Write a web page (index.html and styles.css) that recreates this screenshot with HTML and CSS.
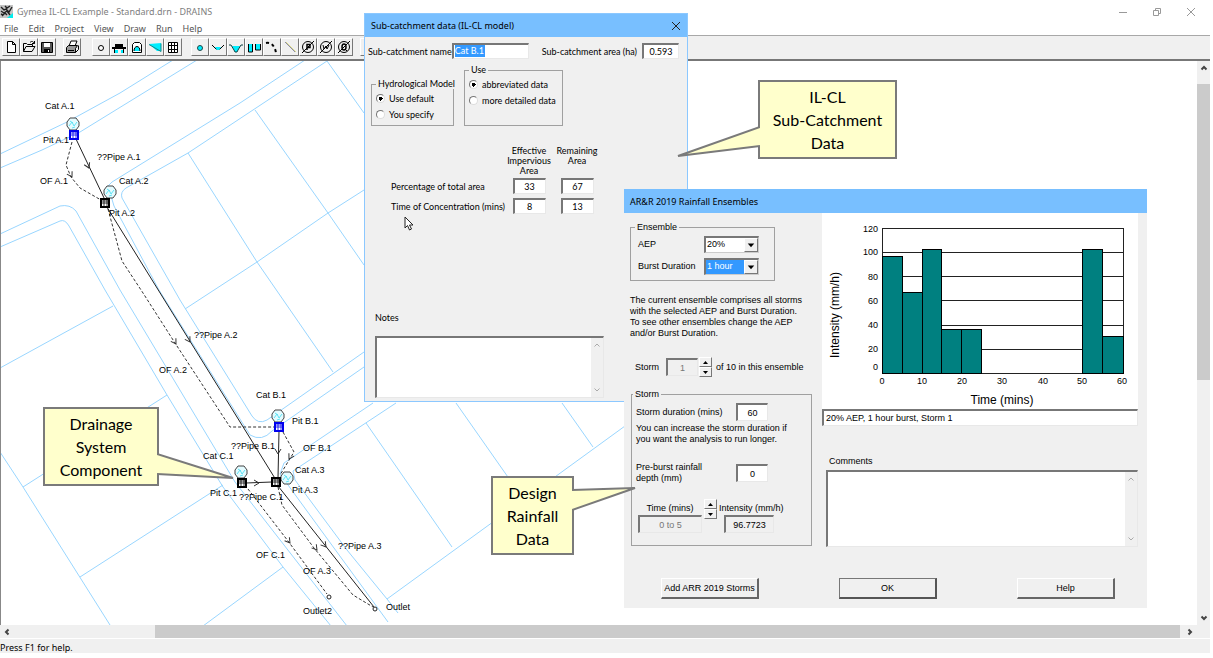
FILE: index.html
```html
<!DOCTYPE html>
<html lang="en">
<head>
    <meta charset="UTF-8">
    <meta name="viewport" content="width=device-width, initial-scale=1.0">
    <title>Gymea IL-CL Example - Standard.drn - DRAINS</title>
    <link rel="stylesheet" href="styles.css">
</head>
<body>

<div class="app">
    <header class="titlebar">
        <svg class="app-icon" width="13" height="13" viewBox="0 0 13 13">
            <rect width="13" height="13" fill="#c4c4c4"/>
            <path d="M1 2l3 3 2-1 3 3 3-5M1 6l3 2 3-2 3 4M2 11l3-3 2 2M5 1l2 2 3-2M1 9l2 1" stroke="#222" stroke-width="1.4" fill="none"/>
            <path d="M7 13l6-5v5z" fill="#0ee"/>
        </svg>
        <span class="app-title">Gymea IL-CL Example - Standard.drn - DRAINS</span>
        <div class="window-buttons">
            <button type="button" aria-label="Minimize"><svg width="10" height="10"><path d="M1 5.500h8"/></svg></button>
            <button type="button" aria-label="Restore"><svg width="10" height="10"><path d="M1.500 3.500h5v5h-5zM3.500 3.500v-2h5v5h-2"/></svg></button>
            <button type="button" aria-label="Close"><svg width="10" height="10"><path d="M1 1l8 8M9 1l-8 8"/></svg></button>
        </div>
    </header>

    <nav class="menubar">
        <button type="button">File</button>
        <button type="button">Edit</button>
        <button type="button">Project</button>
        <button type="button">View</button>
        <button type="button">Draw</button>
        <button type="button">Run</button>
        <button type="button">Help</button>
    </nav>

    <div class="toolbar">
        <div class="tool-group">
            <button type="button" aria-label="New"><svg viewBox="0 0 16 16"><path d="M4.500 2.500h5l3 3v8h-8zM9.500 2.500v3h3" fill="#fff" stroke="#000"/></svg></button>
            <button type="button" aria-label="Open"><svg viewBox="0 0 16 16"><path d="M2.500 12.500v-8h3l1 1h5v2M2.500 12.500l2.500-5h9l-3 5zM9 3.500c2-2 3-1 4.500 1M13.500 2v2.500h-2.500" fill="none" stroke="#000"/></svg></button>
            <button type="button" aria-label="Save"><svg viewBox="0 0 16 16"><path d="M2.500 3.500h11v10h-11z" fill="#555" stroke="#000"/><path d="M5 4h6v4H5z" fill="#fff"/><path d="M5 10h6v4H5z"/><path d="M9 11h1v2H9z" fill="#fff"/></svg></button>
        </div>
        <div class="tool-group">
            <button type="button" aria-label="Print"><svg viewBox="0 0 16 16"><path d="M5 7l2-5h6l-2 5" fill="#fff" stroke="#000"/><path d="M2.500 8.500l2-2h9l-2 3v4h-9z" fill="#999" stroke="#000"/><path d="M11.500 13.500l3-3v-4M4 11.500h6" fill="none" stroke="#000"/></svg></button>
        </div>
        <div class="tool-group wide-gap">
            <button type="button" aria-label="Node"><svg viewBox="0 0 16 16"><circle cx="8" cy="9" r="2.500" fill="#fff" stroke="#000"/></svg></button>
            <button type="button" aria-label="Pit"><svg viewBox="0 0 16 16"><path d="M4 5h8v3h3v2H1V8h3z"/><path d="M4 11h3v3H4zM10 11h3v3h-3z" fill="#0ef"/><path d="M3.500 10v4M12.500 10v4" stroke="#000"/></svg></button>
            <button type="button" aria-label="Sub-catchment"><svg viewBox="0 0 16 16"><path d="M3.500 13.500v-8l2-2h5l2 2v8z" fill="#fff" stroke="#000"/><path d="M5 12c0-6 6-6 6 0" fill="#0ef" stroke="#000"/></svg></button>
            <button type="button" aria-label="Detention basin"><svg viewBox="0 0 16 16"><path d="M2 5l12-1v8h-4z" fill="#0ef"/><path d="M2 5.500l12 7v-8" fill="none" stroke="#188"/></svg></button>
            <button type="button" aria-label="Grid"><svg viewBox="0 0 16 16"><path d="M3.500 3.500h9v10h-9zM6.500 3v11M9.500 3v11M3 6.500h10M3 10.500h10" fill="#fff" stroke="#000"/></svg></button>
        </div>
        <div class="tool-group">
            <button type="button" aria-label="Pipe"><svg viewBox="0 0 16 16"><circle cx="8" cy="9" r="2.500" fill="#0ef" stroke="#244"/></svg></button>
            <button type="button" aria-label="Channel"><svg viewBox="0 0 16 16"><path d="M2 6l4 4h4l4-4" fill="none" stroke="#000"/><path d="M5 8h6l-2 3H7z" fill="#0ef"/></svg></button>
            <button type="button" aria-label="Irregular channel"><svg viewBox="0 0 16 16"><path d="M4 7h8l-2 4-1 2H7l-1-2z" fill="#0ef"/><path d="M1 6h2l3 5 1 2h2l1-2 3-5h2" fill="none" stroke="#144"/></svg></button>
            <button type="button" aria-label="Multi-channel"><svg viewBox="0 0 16 16"><path d="M2.500 5v8h4V5M9.500 5v6h5V5" fill="#0ef" stroke="#000"/></svg></button>
            <button type="button" aria-label="Overflow route"><svg viewBox="0 0 16 16"><path d="M2 4c5-1 9 3 10 10" fill="none" stroke="#000" stroke-width="2" stroke-dasharray="3 3"/></svg></button>
            <button type="button" aria-label="Line"><svg viewBox="0 0 16 16"><path d="M3 3l10 10" stroke="#88a"/><path d="M4 3l10 10" stroke="#dd8"/></svg></button>
            <button type="button" aria-label="Pipe search"><svg viewBox="0 0 16 16"><circle cx="8" cy="8" r="5.500" fill="none" stroke="#000"/><path d="M2 14L14 2" stroke="#000"/><path d="M7 11V5.500h3v3H7" fill="none" stroke="#000" stroke-width="1.500"/></svg></button>
            <button type="button" aria-label="Weir search"><svg viewBox="0 0 16 16"><circle cx="8" cy="8" r="5.500" fill="none" stroke="#000"/><path d="M2 14L14 2M5 6l1 4 2-3 1 3 2-4" fill="none" stroke="#000"/></svg></button>
            <button type="button" aria-label="Flow search"><svg viewBox="0 0 16 16"><circle cx="8" cy="8" r="5.500" fill="none" stroke="#000"/><ellipse cx="8" cy="8" rx="2" ry="3" fill="none" stroke="#000" stroke-width="1.500"/><path d="M2 14L14 2M9 10l2 2" stroke="#000"/></svg></button>
        </div>
        <div class="tool-group">
            <button type="button" aria-label="Zoom"></button>
        </div>
    </div>

    <div class="workspace">
        <svg class="network" role="img" aria-label="Drainage network">
            <defs>
                <g id="catchment">
                    <path d="M-3 -6h6l3 4v4l-3 4h-6l-3 -4v-4z" fill="#e4fbff" stroke="#444"/>
                    <path d="M-4 2l3 -4 2 4 3 -4M-3 -3l3 2M-1 4l3 -1" fill="none" stroke="#5fe3f5"/>
                </g>
                <g id="pit">
                    <rect x="-4" y="-4" width="8" height="8" fill="#fff" stroke="currentColor" stroke-width="2"/>
                    <path d="M-1 -3v6M2 -3v6M-3 0h6M-3 -2h6" stroke="currentColor" fill="none" stroke-width="0.800"/>
                </g>
                <path id="arrow" d="M-5 -3L0 0L-5 3" fill="none" stroke="#333"/>
            </defs>
            <g transform="translate(-1 -61)">
                <!-- road kerbs and lot boundaries -->
                <g class="cadastre">
                    <path d="M0 154L67 122L120 93L173 60"/>
                    <path d="M0 168L42 150L80 132L197 60"/>
                    <path d="M305 60L240 103L112 182L108 186L114 206L159 290L250 435Q262 442 272 431L364 367"/>
                    <path d="M327 61L188 153L126 188Q120 192 122 198L180 300L252 416Q258 425 267 420L364 352"/>
                    <path d="M0 234L60 206Q70 204 76 211L120 290L235 482L347 626"/>
                    <path d="M0 247L60 221Q65 219 69 226L105 290L167 395L223 487L283 567L331 626"/>
                    <path d="M0 368L113 306M167 395L23 487M0 452L23 487L110 625M80 577L223 485M283 567L203 626"/>
                    <path d="M188 153L257 262L333 372M255 110L328 213L364 265M327 61L364 113"/>
                    <path d="M364 190L328 213L257 262L185 309"/>
                    <path d="M373 403L284 463L280 474L388 622"/>
                    <path d="M396 403L293 471L295 480L347 550L387 599L398 613"/>
                    <path d="M366 423L452 547M456 403L510 480M562 403L593 447M625 426L387 599"/>
                </g>
                <g class="overflow">
                    <path d="M72 142L66 165L71 177L80 188L101 200"/>
                    <path d="M108 209L122 261L143 293L175 343L230 427H274"/>
                    <path d="M283 432L294 452L280 475"/>
                    <path d="M248 489L288 541L327 594"/>
                    <path d="M278 487L282 505L314 548L353 595L373 607"/>
                </g>
                <g class="pipe">
                    <path d="M76 139L105 200M105 204L276 480M279 431L278 478M246 483L272 482M278 486L374 607"/>
                </g>
                <use href="#arrow" transform="translate(89 168) rotate(65)"/>
                <use href="#arrow" transform="translate(72 177) rotate(60)"/>
                <use href="#arrow" transform="translate(190 342) rotate(58)"/>
                <use href="#arrow" transform="translate(176 344) rotate(58)"/>
                <use href="#arrow" transform="translate(278 454) rotate(90)"/>
                <use href="#arrow" transform="translate(289 459) rotate(120)"/>
                <use href="#arrow" transform="translate(259 483)"/>
                <use href="#arrow" transform="translate(290 543) rotate(53)"/>
                <use href="#arrow" transform="translate(317 550) rotate(52)"/>
                <use href="#arrow" transform="translate(326 547) rotate(52)"/>

                <use href="#catchment" x="73" y="124"/>
                <use href="#catchment" x="110" y="192"/>
                <use href="#catchment" x="278" y="416"/>
                <use href="#catchment" x="241" y="472"/>
                <use href="#catchment" x="287" y="478"/>
                <use href="#pit" class="pit-selected" x="74" y="135"/>
                <use href="#pit" x="105" y="203"/>
                <use href="#pit" class="pit-selected" x="279" y="427"/>
                <use href="#pit" x="242" y="483"/>
                <use href="#pit" x="276" y="482"/>
                <circle cx="329" cy="597" r="2" fill="#fff" stroke="#222"/>
                <circle cx="375" cy="609" r="2" fill="#fff" stroke="#222"/>

                <g class="labels">
                    <text x="45" y="109">Cat A.1</text>
                    <text x="43" y="143">Pit A.1</text>
                    <text x="97" y="160">??Pipe A.1</text>
                    <text x="40" y="184">OF A.1</text>
                    <text x="119" y="184">Cat A.2</text>
                    <text x="109" y="216">Pit A.2</text>
                    <text x="194" y="338">??Pipe A.2</text>
                    <text x="159" y="373">OF A.2</text>
                    <text x="256" y="398">Cat B.1</text>
                    <text x="292" y="424">Pit B.1</text>
                    <text x="231" y="449">??Pipe B.1</text>
                    <text x="303" y="451">OF B.1</text>
                    <text x="203" y="459">Cat C.1</text>
                    <text x="295" y="473">Cat A.3</text>
                    <text x="292" y="493">Pit A.3</text>
                    <text x="210" y="496">Pit C.1</text>
                    <text x="239" y="500">??Pipe C.1</text>
                    <text x="338" y="549">??Pipe A.3</text>
                    <text x="256" y="558">OF C.1</text>
                    <text x="303" y="574">OF A.3</text>
                    <text x="386" y="610">Outlet</text>
                    <text x="303" y="614">Outlet2</text>
                </g>
            </g>
        </svg>
        <div class="scrollbar vertical">
            <button type="button" aria-label="Scroll up"><svg width="8" height="8"><path d="M1.500 5.500L4 3l2.500 2.500"/></svg></button>
            <div class="track"><div class="thumb"></div></div>
            <button type="button" aria-label="Scroll down"><svg width="8" height="8"><path d="M1.500 2.500L4 5l2.500-2.500"/></svg></button>
        </div>
    </div>
    <div class="scrollbar horizontal">
        <button type="button" aria-label="Scroll left"><svg width="8" height="8"><path d="M5.500 1.500L3 4l2.500 2.500"/></svg></button>
        <div class="track"><div class="thumb"></div></div>
        <button type="button" aria-label="Scroll right"><svg width="8" height="8"><path d="M2.500 1.500L5 4l-2.500 2.500"/></svg></button>
    </div>
    <footer class="statusbar">Press F1 for help.</footer>
</div>

<!-- Sub-catchment dialog -->
<form class="dialog catchment-dialog">
    <div class="dialog-title">
        <span>Sub-catchment data (IL-CL model)</span>
        <button type="button" aria-label="Close"><svg width="10" height="10"><path d="M1 1l8 8M9 1l-8 8"/></svg></button>
    </div>
    <div class="name-row">
        <label for="catName">Sub-catchment name</label>
        <div class="field name-field"><input type="text" id="catName" class="selected" value="Cat B.1"></div>
        <label for="catArea">Sub-catchment area (ha)</label>
        <input type="text" id="catArea" class="field area-field" value="0.593">
    </div>
    <div class="option-row">
        <fieldset class="model-set">
            <legend>Hydrological Model</legend>
            <label><input type="radio" name="model" checked>Use default</label>
            <label><input type="radio" name="model">You specify</label>
        </fieldset>
        <fieldset class="use-set">
            <legend>Use</legend>
            <label><input type="radio" name="detail" checked>abbreviated data</label>
            <label><input type="radio" name="detail">more detailed data</label>
        </fieldset>
    </div>
    <table class="area-table">
        <thead>
            <tr>
                <td></td>
                <th>Effective<br>Impervious<br>Area</th>
                <th>Remaining<br>Area</th>
            </tr>
        </thead>
        <tbody>
            <tr>
                <th scope="row">Percentage of total area</th>
                <td><input type="text" class="field" aria-label="Impervious percentage" value="33"></td>
                <td><input type="text" class="field" aria-label="Remaining percentage" value="67"></td>
            </tr>
            <tr>
                <th scope="row">Time of Concentration (mins)</th>
                <td><input type="text" class="field" aria-label="Impervious time" value="8"></td>
                <td><input type="text" class="field" aria-label="Remaining time" value="13"></td>
            </tr>
        </tbody>
    </table>
    <label class="notes-label" for="notes">Notes</label>
    <div class="memo notes-memo">
        <textarea id="notes"></textarea>
        <div class="memo-scroll">
            <svg width="8" height="8"><path d="M1.500 5.500L4 3l2.500 2.500"/></svg>
            <svg width="8" height="8"><path d="M1.500 2.500L4 5l2.500-2.500"/></svg>
        </div>
    </div>
    <svg class="cursor" width="10" height="15" viewBox="0 0 10 15"><path d="M1 1v11l2.500-2.500L5.500 14l2-1-2-4H9z" fill="#fff" stroke="#222"/></svg>
</form>

<!-- Rainfall dialog -->
<form class="dialog rain-dialog">
    <div class="dialog-title"><span>AR&amp;R 2019 Rainfall Ensembles</span></div>
    <div class="rain-body">
        <div class="rain-left">
            <fieldset class="ensemble-set">
                <legend>Ensemble</legend>
                <div class="combo-row">
                    <label for="aep">AEP</label>
                    <div class="combo">
                        <select id="aep"><option>20%</option></select>
                        <svg viewBox="0 0 13 13"><path d="M3 5h7l-3.500 4z"/></svg>
                    </div>
                </div>
                <div class="combo-row">
                    <label for="burst">Burst Duration</label>
                    <div class="combo">
                        <select id="burst" class="selected"><option>1 hour</option></select>
                        <svg viewBox="0 0 13 13"><path d="M3 5h7l-3.500 4z"/></svg>
                    </div>
                </div>
            </fieldset>
            <p class="ensemble-note">The current ensemble comprises all storms<br>with the selected AEP and Burst Duration.<br>To see other ensembles change the AEP<br>and/or Burst Duration.</p>
            <div class="storm-row">
                <label for="storm">Storm</label>
                <input type="text" id="storm" class="field" value="1" disabled>
                <div class="spinner">
                    <button type="button" aria-label="Next storm"><svg width="5" height="3"><path d="M0 3l2.500-3L5 3z"/></svg></button>
                    <button type="button" aria-label="Previous storm"><svg width="5" height="3"><path d="M0 0l2.500 3L5 0z"/></svg></button>
                </div>
                <span>of 10 in this ensemble</span>
            </div>
            <fieldset class="storm-set">
                <legend>Storm</legend>
                <div class="value-row">
                    <label for="duration">Storm duration (mins)</label>
                    <input type="text" id="duration" class="field" value="60">
                </div>
                <p>You can increase the storm duration if<br>you want the analysis to run longer.</p>
                <div class="value-row preburst">
                    <label for="preburst">Pre-burst rainfall<br>depth (mm)</label>
                    <input type="text" id="preburst" class="field" value="0">
                </div>
                <div class="interval-row">
                    <div class="stack time-stack">
                        <label for="interval">Time (mins)</label>
                        <input type="text" id="interval" class="field" value="0 to 5" disabled>
                    </div>
                    <div class="spinner">
                        <button type="button" aria-label="Next interval"><svg width="5" height="3"><path d="M0 3l2.500-3L5 3z"/></svg></button>
                        <button type="button" aria-label="Previous interval"><svg width="5" height="3"><path d="M0 0l2.500 3L5 0z"/></svg></button>
                    </div>
                    <div class="stack intensity-stack">
                        <label for="intensity">Intensity (mm/h)</label>
                        <input type="text" id="intensity" class="field plain" value="96.7723" readonly>
                    </div>
                </div>
            </fieldset>
        </div>
        <div class="rain-right">
            <svg class="chart" viewBox="0 0 316 196" role="img" aria-label="Storm hyetograph">
                <path class="grid" d="M60 15.500h241M60 39.500h241M60 63.500h241M60 87.500h241M60 112.500h241M60 136.500h241M60 160.500h241M60.500 15v145M301.500 15v145"/>
                <g class="bars">
                    <rect x="60.500" y="43.500" width="20" height="117"/>
                    <rect x="80.500" y="79.500" width="20" height="81"/>
                    <rect x="100.500" y="36.500" width="19" height="124"/>
                    <rect x="119.500" y="116.500" width="20" height="44"/>
                    <rect x="139.500" y="116.500" width="20" height="44"/>
                    <rect x="260.500" y="36.500" width="20" height="124"/>
                    <rect x="280.500" y="123.500" width="21" height="37"/>
                </g>
                <g class="ticks" text-anchor="end">
                    <text x="56" y="19">120</text>
                    <text x="56" y="42">100</text>
                    <text x="56" y="67">80</text>
                    <text x="56" y="91">60</text>
                    <text x="56" y="115">40</text>
                    <text x="56" y="139">20</text>
                    <text x="56" y="157">0</text>
                </g>
                <g class="ticks" text-anchor="middle">
                    <text x="60" y="171">0</text>
                    <text x="100" y="171">10</text>
                    <text x="140" y="171">20</text>
                    <text x="180" y="171">30</text>
                    <text x="221" y="171">40</text>
                    <text x="260" y="171">50</text>
                    <text x="300" y="171">60</text>
                </g>
                <text class="axis" x="180" y="191" text-anchor="middle">Time (mins)</text>
                <text class="axis" transform="translate(17 102) rotate(-90)" text-anchor="middle">Intensity (mm/h)</text>
            </svg>
            <input type="text" class="field caption" aria-label="Storm description" value="20% AEP, 1 hour burst, Storm 1">
            <label class="comments-label" for="comments">Comments</label>
            <div class="memo comments-memo">
                <textarea id="comments"></textarea>
                <div class="memo-scroll">
                    <svg width="8" height="8"><path d="M1.500 5.500L4 3l2.500 2.500"/></svg>
                    <svg width="8" height="8"><path d="M1.500 2.500L4 5l2.500-2.500"/></svg>
                </div>
            </div>
        </div>
    </div>
    <div class="actions">
        <button type="button">Add ARR 2019 Storms</button>
        <button type="button" class="default">OK</button>
        <button type="button">Help</button>
    </div>
</form>

<!-- Callouts -->
<div class="callout callout-catchment">
    IL-CL<br>Sub-Catchment<br>Data
    <svg class="pointer" width="84" height="36"><path d="M84 5L2 34L84 24"/></svg>
</div>
<div class="callout callout-network">
    Drainage<br>System<br>Component
    <svg class="pointer" width="80" height="30"><path d="M0 3L76 27L0 23"/></svg>
</div>
<div class="callout callout-rain">
    Design<br>Rainfall<br>Data
    <svg class="pointer" width="66" height="26"><path d="M0 4L63 2L0 24"/></svg>
</div>

</body>
</html>
```
FILE: styles.css
```css
* {
    box-sizing: border-box;
}
body {
    margin: 0;
    background: #fff;
    color: #000;
    font-family: "Noto Sans", sans-serif;
    font-size: 9px;
    line-height: 11px;
    overflow: hidden;
}
button, input, select, textarea {
    font: inherit;
    color: inherit;
    margin: 0;
    padding: 0;
    border: 0;
    border-radius: 0;
    background: none;
}
fieldset {
    margin: 0;
    min-width: 0;
    border: 1px solid #a0a0a0;
}
legend {
    padding: 0 2px;
    line-height: 10px;
}
p {
    margin: 0;
}

/* main window */
.app {
    display: flex;
    flex-direction: column;
    height: 100vh;
    padding: 0 3px 5px 0;
}
.titlebar {
    display: flex;
    align-items: center;
    height: 21px;
    padding-top: 2px;
    color: #808080;
}
.app-title {
    flex: 1;
    margin-left: 4px;
}
.window-buttons {
    display: flex;
    gap: 24px;
    margin-right: 14px;
}
.window-buttons button {
    display: flex;
}
.window-buttons path {
    fill: none;
    stroke: #999;
}
.menubar {
    display: flex;
    gap: 10px;
    height: 14px;
    padding-left: 4px;
    color: #555;
}
.toolbar {
    display: flex;
    gap: 7px;
    height: 26px;
    padding: 2px 2px 4px;
    background: #f0f0f0;
    border-top: 1px solid #a8a8a8;
    border-bottom: 2px solid #777;
}
.tool-group {
    display: flex;
}
.wide-gap {
    margin: 0 2px 0 4px;
}
.tool-group button {
    width: 18px;
    height: 18px;
    border: 1px solid;
    border-color: #fff #777 #777 #fff;
}
.tool-group svg {
    display: block;
    width: 16px;
    height: 16px;
}
.workspace {
    display: flex;
    flex: 1;
    min-height: 0;
    border-left: 1px solid #888;
}
.network {
    flex: 1;
    min-width: 0;
    height: 100%;
}
.cadastre path {
    fill: none;
    stroke: #99d6ff;
}
.overflow path {
    fill: none;
    stroke: #333;
    stroke-dasharray: 3 2;
}
.pipe path {
    fill: none;
    stroke: #222;
}
.pit-selected {
    color: #00e;
}
.labels {
    font-family: "Liberation Sans", Arial, sans-serif;
    font-size: 9px;
}
.scrollbar {
    display: flex;
    background: #f0f0f0;
}
.scrollbar button {
    display: flex;
    flex: 0 0 14px;
    align-items: center;
    justify-content: center;
}
.scrollbar path {
    fill: none;
    stroke: #444;
    stroke-width: 2;
}
.track {
    display: flex;
    flex: 1;
}
.track::before, .track::after {
    content: "";
}
.thumb {
    background: #cbcbcb;
}
.vertical, .vertical .track {
    flex-direction: column;
}
.vertical {
    width: 13px;
}
.vertical .track::before { flex: 9; }
.vertical .thumb { flex: 297; }
.vertical .track::after { flex: 231; }
.horizontal {
    height: 13px;
    padding-right: 13px;
}
.horizontal .track::before { flex: 141; }
.horizontal .thumb { flex: 1025; }
.horizontal .track::after { flex: 3; }
.statusbar {
    height: 14px;
    margin-top: 1px;
    padding-top: 3px;
    background: #f0f0f0;
}

/* dialogs */
.dialog {
    position: absolute;
    background: #f0f0f0;
    font-family: "Liberation Sans", Arial, sans-serif;
}
.dialog-title {
    display: flex;
    align-items: center;
    justify-content: space-between;
    height: 24px;
    padding: 0 6px;
    background: #78bfff;
    font-family: "Noto Sans", sans-serif;
}
.dialog-title button {
    display: flex;
}
.dialog-title path {
    fill: none;
    stroke: #222;
}
.field {
    height: 16px;
    text-align: center;
    background: #fff;
    border: 1px solid;
    border-color: #777 #e8e8e8 #e8e8e8 #777;
    border-width: 2px 1px 1px 2px;
}
.field:disabled {
    color: #777;
    background: #f0f0f0;
}
.field.plain {
    background: #f0f0f0;
}
.memo {
    display: flex;
    background: #fff;
    border: 1px solid;
    border-color: #777 #e8e8e8 #e8e8e8 #777;
    border-width: 2px 1px 1px 2px;
}
.memo textarea {
    flex: 1;
    resize: none;
    outline: 0;
}
.memo-scroll {
    display: flex;
    flex-direction: column;
    justify-content: space-between;
    width: 12px;
    padding: 3px 2px;
    background: #f0f0f0;
}
.memo-scroll path {
    fill: none;
    stroke: #aaa;
}

.catchment-dialog {
    left: 364px;
    top: 13px;
    width: 324px;
    border: 1px solid #8cc8ff;
    font-family: Lato, sans-serif;
    white-space: nowrap;
}
.catchment-dialog .dialog-title {
    height: 23px;
}
.name-row {
    display: flex;
    align-items: center;
    margin-top: 6px;
    padding: 0 8px 0 3px;
}
.name-field {
    width: 82px;
    margin: 0 13px 0 auto;
    text-align: left;
}
.name-field input {
    display: block;
    width: 30px;
    margin-left: 1px;
    line-height: 12px;
    height: 12px;
}
.selected {
    color: #fff;
    background: #3399ff;
}
.area-field {
    width: 37px;
    margin-left: 5px;
}
.option-row {
    display: flex;
    align-items: flex-end;
    gap: 10px;
    margin-top: 6px;
    padding-left: 6px;
}
.option-row label {
    display: flex;
    align-items: center;
    height: 16px;
}
.option-row input {
    appearance: none;
    width: 9px;
    height: 9px;
    margin-right: 4px;
    background: #fff;
    border: 1px solid;
    border-color: #777 #ddd #ddd #777;
    border-radius: 50%;
}
.option-row input:checked {
    background: radial-gradient(circle, #000 2px, #fff 2px);
}
.model-set {
    width: 83px;
    padding: 1px 4px 3px;
}
.use-set {
    width: 99px;
    padding: 1px 4px 17px;
}
.area-table {
    margin: 20px 0 0 26px;
    border-collapse: collapse;
}
.area-table td, .area-table th {
    height: 20px;
    padding: 0;
    font-weight: normal;
    text-align: center;
}
.area-table thead th {
    width: 48px;
    line-height: 10px;
    vertical-align: top;
}
.area-table td:first-child, .area-table th[scope] {
    width: 110px;
    text-align: left;
}
.area-table input {
    width: 33px;
}
.notes-label {
    display: block;
    margin: 96px 0 13px 10px;
}
.notes-memo {
    height: 62px;
    margin: 0 83px 3px 10px;
}
.cursor {
    position: absolute;
    left: 39px;
    top: 202px;
}

.rain-dialog {
    left: 624px;
    top: 189px;
    width: 523px;
    padding-bottom: 9px;
}
.rain-body {
    display: grid;
    grid-template-columns: 198px 1fr;
}
.rain-left {
    padding-left: 6px;
}
.ensemble-set {
    width: 145px;
    margin-top: 9px;
    padding: 1px 7px 3px;
}
.ensemble-set legend, .storm-set legend {
    margin-left: -3px;
}
.combo-row {
    display: flex;
    align-items: center;
    height: 22px;
}
.combo-row label {
    width: 66px;
}
.combo {
    display: flex;
    width: 55px;
    height: 17px;
    background: #fff;
    border: 1px solid;
    border-color: #777 #ccc #ccc #777;
    border-width: 2px 1px 1px 2px;
}
.combo select {
    appearance: none;
    flex: 1;
    min-width: 0;
    padding-left: 1px;
}
.combo svg {
    width: 14px;
    height: 14px;
    background: #f0f0f0;
    border: 1px solid;
    border-color: #fff #777 #777 #fff;
}
.ensemble-note {
    margin-top: 14px;
    white-space: nowrap;
}
.storm-row {
    display: flex;
    align-items: center;
    height: 20px;
    margin: 18px 0 0 5px;
}
.storm-row label {
    width: 31px;
}
.storm-row .field {
    width: 32px;
    height: 18px;
    margin-right: 1px;
}
.storm-row span {
    margin-left: 4px;
    white-space: nowrap;
}
.spinner {
    display: flex;
    flex-direction: column;
    width: 13px;
    height: 20px;
}
.spinner button {
    display: flex;
    flex: 1;
    align-items: center;
    justify-content: center;
    border: 1px solid;
    border-color: #fff #777 #777 #fff;
}
.storm-set {
    width: 181px;
    margin: 12px 0 0 1px;
    padding: 4px 4px 12px;
}
.value-row {
    display: flex;
    align-items: center;
}
.value-row label {
    width: 100px;
}
.value-row .field {
    width: 32px;
    height: 18px;
}
.storm-set p {
    margin: 2px 0 17px;
    white-space: nowrap;
}
.interval-row {
    display: flex;
    align-items: flex-start;
    gap: 2px;
    margin-top: 15px;
    padding-left: 2px;
}
.stack {
    display: flex;
    flex-direction: column;
    gap: 1px;
    margin-top: 4px;
    white-space: nowrap;
}
.stack .field {
    height: 18px;
}
.time-stack {
    width: 64px;
    text-align: center;
}
.intensity-stack .field {
    width: 50px;
    margin-left: 5px;
}
.rain-right {
    display: flex;
    flex-direction: column;
    padding-right: 9px;
}
.chart {
    display: block;
    background: #fff;
}
.chart .grid {
    fill: none;
    stroke: #222;
}
.chart .bars {
    fill: #008080;
    stroke: #000;
}
.chart .ticks {
    font-size: 9px;
}
.chart .axis {
    font-size: 12px;
}
.caption {
    height: 17px;
    padding-left: 2px;
    text-align: left;
}
.comments-label {
    margin: 30px 0 3px 7px;
}
.comments-memo {
    height: 77px;
    margin-left: 4px;
}
.actions {
    display: flex;
    gap: 80px;
    margin-top: 31px;
    padding-left: 37px;
}
.actions button {
    width: 98px;
    height: 21px;
    border: 1px solid;
    border-color: #fff #666 #666 #fff;
    border-width: 1px 2px 2px 1px;
    white-space: nowrap;
}
.actions .default {
    border-color: #777 #555 #555 #777;
}

/* callouts */
.callout {
    position: absolute;
    padding: 3px 0;
    background: #ffffcc;
    border: 2px solid #7a7a7a;
    font-family: Lato, sans-serif;
    font-size: 16px;
    line-height: 23px;
    text-align: center;
    white-space: nowrap;
}
.callout-catchment {
    left: 758px;
    top: 80px;
    width: 139px;
}
.callout-network {
    left: 43px;
    top: 407px;
    width: 116px;
}
.callout-rain {
    left: 491px;
    top: 476px;
    width: 83px;
}
.pointer {
    position: absolute;
    left: 100%;
}
.pointer path {
    fill: #ffffcc;
    stroke: #7a7a7a;
    stroke-width: 2;
}
.callout-catchment .pointer {
    left: auto;
    right: 100%;
    top: 40px;
}
.callout-network .pointer {
    top: 42px;
}
.callout-rain .pointer {
    top: 8px;
}
```
